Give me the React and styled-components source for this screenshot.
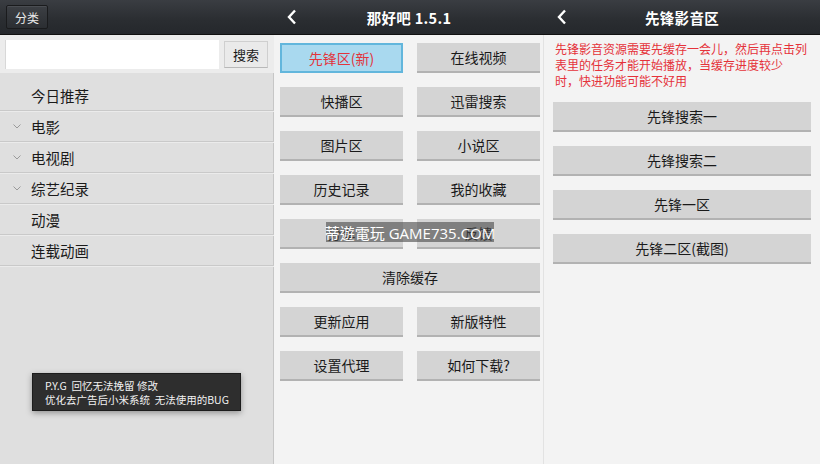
import styled, { createGlobalStyle } from "styled-components";

const GlobalStyle = createGlobalStyle`
  html, body {
    margin: 0;
    padding: 0;
    width: 820px;
    height: 464px;
    overflow: hidden;
    font-family: "Noto Sans CJK SC", "Noto Sans", sans-serif;
  }
`;

const menuItems = [
  { label: "今日推荐", fold: false },
  { label: "电影", fold: true },
  { label: "电视剧", fold: true },
  { label: "综艺纪录", fold: true },
  { label: "动漫", fold: false },
  { label: "连载动画", fold: false },
];

const gridRows = [
  ["先锋区(新)", "在线视频"],
  ["快播区", "迅雷搜索"],
  ["图片区", "小说区"],
  ["历史记录", "我的收藏"],
  ["分享", "反馈"],
  ["清除缓存"],
  ["更新应用", "新版特性"],
  ["设置代理", "如何下载?"],
];

const pioneerButtons = ["先锋搜索一", "先锋搜索二", "先锋一区", "先锋二区(截图)"];

const BackIcon = () => (
  <svg width="10" height="16" viewBox="0 0 10 16">
    <path d="M8 1.5 L2 8 L8 14.5" fill="none" stroke="#fff" strokeWidth="2.4" />
  </svg>
);

const FoldIcon = () => (
  <svg width="8" height="5" viewBox="0 0 8 5">
    <path d="M0.5 0.5 L4 4 L7.5 0.5" fill="none" stroke="#9a9a9a" strokeWidth="1" />
  </svg>
);

function App() {
  return (
    <>
      <GlobalStyle />
      <Page>
        <Column $width={274} $bg="#dfdfdf" $edge="#c6c6c6">
          <TopBar>
            <DarkButton>分类</DarkButton>
          </TopBar>
          <SearchRow>
            <SearchInput />
            <SearchButton>搜索</SearchButton>
          </SearchRow>
          <Menu>
            {menuItems.map((item) => (
              <MenuRow key={item.label}>
                <FoldSlot>{item.fold && <FoldIcon />}</FoldSlot>
                {item.label}
              </MenuRow>
            ))}
          </Menu>
        </Column>

        <Column $width={270} $bg="#f3f3f3" $edge="#e2e2e2">
          <TopBar>
            <BackSlot>
              <BackIcon />
            </BackSlot>
            <Title>那好吧 1.5.1</Title>
          </TopBar>
          <ButtonGrid>
            {gridRows.map((row) =>
              row.map((label) => (
                <GrayButton
                  key={label}
                  $wide={row.length === 1}
                  $active={label === "先锋区(新)"}
                >
                  {label}
                </GrayButton>
              ))
            )}
          </ButtonGrid>
        </Column>

        <Column $width={276} $bg="#f3f3f3">
          <TopBar>
            <BackSlot>
              <BackIcon />
            </BackSlot>
            <Title>先锋影音区</Title>
          </TopBar>
          <Notice>
            先锋影音资源需要先缓存一会儿，然后再点击列
            <br />
            表里的任务才能开始播放，当缓存进度较少
            <br />
            时，快进功能可能不好用
          </Notice>
          <ButtonList>
            {pioneerButtons.map((label) => (
              <GrayButton key={label}>{label}</GrayButton>
            ))}
          </ButtonList>
        </Column>

        <Toast>
          P.Y.G&nbsp; 回忆无法挽留 修改
          <br />
          优化去广告后小米系统&nbsp; 无法使用的BUG
        </Toast>
        <Watermark>蒂遊電玩 GAME735.COM</Watermark>
      </Page>
    </>
  );
}

export default App;

const Page = styled.div`
  position: relative;
  display: flex;
  width: 820px;
  height: 464px;
  overflow: hidden;
`;

const Column = styled.section`
  display: flex;
  flex-direction: column;
  width: ${(p) => p.$width}px;
  flex-shrink: 0;
  background: ${(p) => p.$bg};
  box-shadow: ${(p) => (p.$edge ? `inset -1px 0 0 ${p.$edge}` : "none")};
`;

const TopBar = styled.header`
  position: relative;
  height: 34px;
  flex-shrink: 0;
  display: flex;
  align-items: center;
  justify-content: center;
  padding: 0 6px;
  background: linear-gradient(#3a3d42, #2a2d31 60%, #25282c);
  border-bottom: 1px solid #111;
`;

const DarkButton = styled.div`
  margin-right: auto;
  width: 42px;
  height: 24px;
  display: flex;
  align-items: center;
  justify-content: center;
  box-sizing: border-box;
  background: linear-gradient(#3c3f44, #2b2e32);
  border: 1px solid #1a1b1d;
  border-radius: 2px;
  box-shadow: inset 0 1px 0 #4a4d52;
  color: #e8e8e8;
  font-size: 12px;
`;

const BackSlot = styled.div`
  position: absolute;
  left: 13px;
  top: 9px;
  display: flex;
`;

const Title = styled.h1`
  margin: 0;
  color: #fff;
  font-size: 14.5px;
  font-weight: bold;
  letter-spacing: 0.3px;
`;

const SearchRow = styled.div`
  height: 38px;
  display: flex;
  align-items: center;
  gap: 5px;
  padding: 0 6px 0 5px;
  background: #ececec;
`;

const SearchInput = styled.div`
  flex: 1;
  height: 29px;
  background: #fff;
  border-left: 1px solid #d8d8d8;
`;

const SearchButton = styled.div`
  width: 44px;
  height: 27px;
  display: flex;
  align-items: center;
  justify-content: center;
  box-sizing: border-box;
  background: #eaeaea;
  border: 1px solid #cfcfcf;
  border-bottom-color: #b8b8b8;
  color: #1a1a1a;
  font-size: 13px;
`;

const Menu = styled.ul`
  margin: 0;
  padding: 8px 0 0;
  list-style: none;
`;

const MenuRow = styled.li`
  height: 29px;
  display: flex;
  align-items: center;
  padding-left: 13px;
  border-bottom: 1px solid #c9c9c9;
  box-shadow: 0 1px 0 #ebebeb;
  margin-bottom: 1px;
  color: #1a1a1a;
  font-size: 14.5px;
`;

const FoldSlot = styled.span`
  width: 18px;
  display: flex;
  align-items: center;
`;

const ButtonGrid = styled.div`
  display: grid;
  grid-template-columns: 123px 123px;
  column-gap: 14px;
  row-gap: 14px;
  padding: 8px 0 0 6px;
`;

const GrayButton = styled.div`
  grid-column: ${(p) => (p.$wide ? "1 / span 2" : "auto")};
  height: 30px;
  display: flex;
  align-items: center;
  justify-content: center;
  box-sizing: border-box;
  background: ${(p) => (p.$active ? "#a9d9ef" : "#d4d4d4")};
  border: ${(p) => (p.$active ? "2px solid #62b6dc" : "none")};
  border-bottom: ${(p) => (p.$active ? "2px solid #62b6dc" : "2px solid #b2b2b2")};
  color: ${(p) => (p.$active ? "#e2343c" : "#1a1a1a")};
  font-size: 14px;
`;

const Notice = styled.p`
  margin: 0;
  padding: 6px 0 0 11px;
  color: #e5323a;
  font-size: 12px;
  line-height: 16px;
`;

const ButtonList = styled.div`
  display: flex;
  flex-direction: column;
  gap: 14px;
  padding: 13px 9px 0 9px;
`;

const Toast = styled.div`
  position: absolute;
  left: 32px;
  top: 373px;
  width: 209px;
  height: 38px;
  box-sizing: border-box;
  padding: 5px 0 0 12px;
  background: #2e2e2e;
  border: 1px solid #1c1c1c;
  box-shadow: 0 2px 6px rgba(0, 0, 0, 0.35);
  color: #f2f2f2;
  font-size: 10.5px;
  line-height: 14px;
`;

const Watermark = styled.div`
  position: absolute;
  left: 326px;
  top: 222px;
  width: 168px;
  height: 20px;
  display: flex;
  align-items: center;
  justify-content: center;
  background: rgba(70, 70, 70, 0.6);
  color: #fff;
  font-family: "Open Sans", "Noto Sans CJK TC", sans-serif;
  font-size: 15px;
  white-space: nowrap;
`;
